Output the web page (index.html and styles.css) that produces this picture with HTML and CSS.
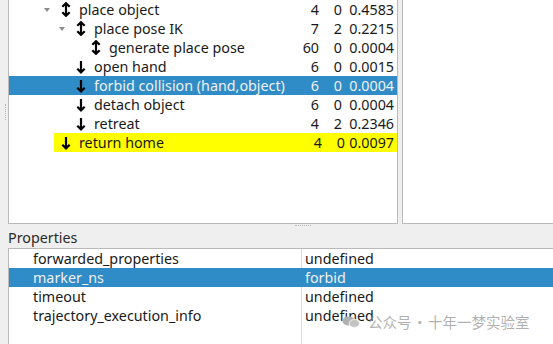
FILE: index.html
```html
<!DOCTYPE html>
<html lang="en">
<head>
    <meta charset="UTF-8">
    <title>Task Stages</title>
    <link rel="stylesheet" href="styles.css">
</head>
<body>
    <svg class="defs" width="0" height="0">
        <symbol id="both" viewBox="0 0 10 15">
            <path d="M5 1 V14 M1.3 4.8 L5 1.2 L8.7 4.8 M1.3 10.2 L5 13.8 L8.7 10.2" fill="none" stroke="#000" stroke-width="2.2"/>
        </symbol>
        <symbol id="down" viewBox="0 0 10 15">
            <path d="M5 2 V13.5 M1.3 9.8 L5 13.4 L8.7 9.8" fill="none" stroke="#000" stroke-width="2.2"/>
        </symbol>
    </svg>

    <div class="top">
        <div class="gutter"><span class="grip-v"></span></div>

        <!-- stage tree -->
        <div class="tree">
            <div class="row">
                <div class="name l1"><span class="branch"><i class="tri"></i></span><span class="item"><svg class="ico"><use href="#both"/></svg>place object</span></div>
                <div class="num">4</div><div class="num">0</div><div class="num">0.4583</div>
            </div>
            <div class="row">
                <div class="name l2"><span class="branch"><i class="tri"></i></span><span class="item"><svg class="ico"><use href="#both"/></svg>place pose IK</span></div>
                <div class="num">7</div><div class="num">2</div><div class="num">0.2215</div>
            </div>
            <div class="row">
                <div class="name l3"><span class="branch"></span><span class="item"><svg class="ico"><use href="#both"/></svg>generate place pose</span></div>
                <div class="num">60</div><div class="num">0</div><div class="num">0.0004</div>
            </div>
            <div class="row">
                <div class="name l2"><span class="branch"></span><span class="item"><svg class="ico"><use href="#down"/></svg>open hand</span></div>
                <div class="num">6</div><div class="num">0</div><div class="num">0.0015</div>
            </div>
            <div class="row selected">
                <div class="name l2"><span class="branch"></span><span class="item"><svg class="ico"><use href="#down"/></svg>forbid collision (hand,object)</span></div>
                <div class="num">6</div><div class="num">0</div><div class="num">0.0004</div>
            </div>
            <div class="row">
                <div class="name l2"><span class="branch"></span><span class="item"><svg class="ico"><use href="#down"/></svg>detach object</span></div>
                <div class="num">6</div><div class="num">0</div><div class="num">0.0004</div>
            </div>
            <div class="row">
                <div class="name l2"><span class="branch"></span><span class="item"><svg class="ico"><use href="#down"/></svg>retreat</span></div>
                <div class="num">4</div><div class="num">2</div><div class="num">0.2346</div>
            </div>
            <div class="row marked">
                <div class="name l1"><span class="branch"></span><span class="item"><svg class="ico"><use href="#down"/></svg>return home</span></div>
                <div class="num">4</div><div class="num">0</div><div class="num">0.0097</div>
            </div>
        </div>

        <div class="side"></div>
    </div>

    <div class="split"><span class="grip-h"></span></div>

    <div class="props-label">Properties</div>
    <div class="props">
        <div class="prop"><span class="key">forwarded_properties</span><span class="val">undefined</span></div>
        <div class="prop selected"><span class="key">marker_ns</span><span class="val">forbid</span></div>
        <div class="prop"><span class="key">timeout</span><span class="val">undefined</span></div>
        <div class="prop"><span class="key">trajectory_execution_info</span><span class="val">undefined</span></div>
    </div>

    <!-- watermark over the property list -->
    <div class="watermark">
        <svg class="wm-icon" viewBox="0 0 20 12">
            <ellipse cx="7" cy="5" rx="6.5" ry="4.8" fill="#b0b0b0"/>
            <ellipse cx="13" cy="7.5" rx="5.5" ry="4.2" fill="#c4c4c4" stroke="#fff" stroke-width="0.8"/>
        </svg>
        <span>公众号<span class="dot">·</span>十年一梦实验室</span>
    </div>
</body>
</html>
```

FILE: styles.css
```css
body {
    margin: 0;
    width: 553px;
    height: 344px;
    overflow: hidden;
    background: #efefef;
    font-family: "Noto Sans", "DejaVu Sans", "Noto Sans CJK SC", sans-serif;
    font-size: 14.3px;
    color: #1a1a1a;
    position: relative;
}
.defs {
    position: absolute;
}
.top {
    display: flex;
    height: 224px;
}
.gutter {
    width: 8px;
    display: flex;
    align-items: center;
}
.grip-v {
    margin-left: 5px;
    width: 0;
    height: 16px;
    border-left: 1px dotted #b8b8b8;
}
.tree {
    width: 388px;
    background: #fff;
    border: 1px solid #bababa;
    border-top: none;
}
.side {
    flex: 1;
    margin-left: 4px;
    background: #fff;
    border-left: 1px solid #bababa;
    border-bottom: 1px solid #bababa;
}
.row {
    display: grid;
    grid-template-columns: 1fr 28px 23px 52px;
    height: 19px;
    line-height: 19px;
    padding-right: 3px;
}
.name {
    display: flex;
    white-space: nowrap;
}
.name.l1 { padding-left: 30px; }
.name.l2 { padding-left: 45px; }
.name.l3 { padding-left: 60px; }
.branch {
    width: 15px;
    display: flex;
    align-items: center;
    justify-content: center;
}
.tri {
    width: 0;
    height: 0;
    border-left: 3.5px solid transparent;
    border-right: 3.5px solid transparent;
    border-top: 4px solid #8c8c8c;
}
.item {
    flex: 1;
    display: flex;
    align-items: center;
}
.ico {
    width: 10px;
    height: 15px;
    margin: 0 8px 0 7px;
}
.num {
    text-align: right;
}
.row.selected {
    background: #308cc6;
    color: #eff0f1;
}
.row.marked .item,
.row.marked .num {
    background: #ffff00;
}
.row.marked {
    padding-right: 0;
}
.row.marked .num:last-child {
    padding-right: 3px;
}
.split {
    height: 3px;
}
.grip-h {
    display: block;
    margin: 1px 0 0 295px;
    width: 16px;
    border-top: 1px dotted #b8b8b8;
}
.props-label {
    height: 20px;
    line-height: 19px;
    padding-left: 8px;
    color: #2a2a2a;
}
.props {
    margin-left: 8px;
    height: 96px;
    background: #fff linear-gradient(#dcdcdc, #dcdcdc) no-repeat 292px 0 / 1px 100%;
    border-left: 1px solid #bababa;
    border-top: 1px solid #bababa;
}
.prop {
    display: flex;
    height: 19px;
    line-height: 19px;
}
.prop .key {
    width: 269px;
    padding-left: 24px;
}
.prop .val {
    padding-left: 3px;
}
.prop.selected {
    background: #308cc6;
    color: #eff0f1;
}
.watermark {
    position: absolute;
    left: 342px;
    top: 311px;
    display: flex;
    align-items: center;
    gap: 7px;
    color: rgba(150, 150, 150, 0.75);
    font-size: 14.5px;
    font-family: "Noto Sans CJK SC", sans-serif;
}
.watermark .dot {
    margin: 0 1px;
}
.wm-icon {
    width: 19px;
    height: 12px;
}
```
